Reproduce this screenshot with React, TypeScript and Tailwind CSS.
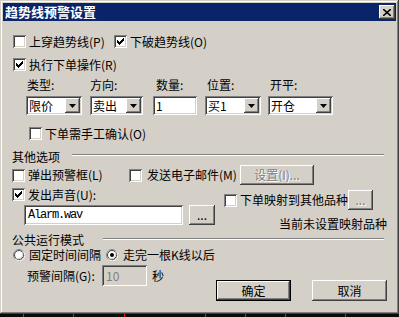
import React from "react";

const sunken =
  "shadow-[inset_1px_1px_#808080,inset_-1px_-1px_#ffffff,inset_2px_2px_#404040,inset_-2px_-2px_#d4d0c8]";
const raised =
  "shadow-[inset_-1px_-1px_#404040,inset_1px_1px_#ffffff,inset_-2px_-2px_#808080,inset_2px_2px_#d4d0c8]";
const disabledText = "text-[#808080] [text-shadow:1px_1px_#ffffff]";

function Check({ checked }: { checked?: boolean }) {
  const cols = [
    [3, 5],
    [4, 6],
    [5, 7],
    [6, 6],
    [7, 5],
    [8, 4],
    [9, 3],
  ];
  return (
    <div className={`w-[13px] h-[13px] bg-white shrink-0 relative ${sunken}`}>
      {checked && (
        <svg width="13" height="13" className="absolute left-0 top-0">
          {cols.map(([x, y]) => (
            <rect key={x} x={x} y={y} width="1" height="3" fill="#000" />
          ))}
        </svg>
      )}
    </div>
  );
}

function CheckLabel({
  checked,
  text,
  className = "",
  gap = "gap-[3px]",
}: {
  checked?: boolean;
  text: string;
  className?: string;
  gap?: string;
}) {
  return (
    <div className={`flex items-center h-[13px] shrink-0 ${gap} ${className}`}>
      <Check checked={checked} />
      <span className="whitespace-nowrap">{text}</span>
    </div>
  );
}

function Radio({ checked }: { checked?: boolean }) {
  return (
    <svg width="12" height="12" className="shrink-0">
      <circle cx="6" cy="6" r="5.5" fill="#fff" stroke="#808080" />
      <path d="M10.2 2.4 A5.5 5.5 0 0 1 2.4 10.2" fill="none" stroke="#fff" />
      <circle cx="6" cy="6" r="4.5" fill="#fff" stroke="#404040" />
      <path d="M9.3 3.2 A4.5 4.5 0 0 1 3.2 9.3" fill="none" stroke="#d4d0c8" />
      {checked && <circle cx="6" cy="6" r="2" fill="#000" />}
    </svg>
  );
}

function Select({ text, className }: { text: string; className: string }) {
  return (
    <div className={`h-[19px] bg-white flex items-center shrink-0 ${sunken} ${className}`}>
      <span className="flex-1 pl-[3px] whitespace-nowrap leading-[15px]">{text}</span>
      <div
        className={`w-[15px] h-[15px] mr-[2px] bg-[#d4d0c8] flex items-center justify-center ${raised}`}
      >
        <svg width="7" height="4">
          <path d="M0 0 H7 L3.5 4 Z" fill="#000" />
        </svg>
      </div>
    </div>
  );
}

function Btn({
  children,
  className,
  disabled,
  isDefault,
}: {
  children: React.ReactNode;
  className: string;
  disabled?: boolean;
  isDefault?: boolean;
}) {
  if (isDefault) {
    return (
      <div className={`border border-black shrink-0 flex ${className}`}>
        <div className={`flex-1 bg-[#d4d0c8] flex items-center justify-center ${raised}`}>
          {children}
        </div>
      </div>
    );
  }
  return (
    <div
      className={`bg-[#d4d0c8] flex items-center justify-center shrink-0 ${raised} ${
        disabled ? disabledText : ""
      } ${className}`}
    >
      {children}
    </div>
  );
}

export default function App() {
  return (
    <div className="w-[399px] h-[317px] bg-[#0a0a0a] overflow-hidden [font-family:'Noto_Sans_CJK_SC',sans-serif] text-[12px] leading-[14px] text-black">
      <div className="w-[399px] h-[314px] bg-[#d4d0c8] p-[3px] shadow-[inset_-1px_-1px_#404040,inset_1px_1px_#d4d0c8,inset_-2px_-2px_#808080,inset_2px_2px_#ffffff] flex flex-col">
        {/* Title bar */}
        <div className="h-[18px] bg-[#0a246a] flex items-center justify-between pl-[2px] pr-[1px] shrink-0">
          <span className="text-white font-bold text-[13px] leading-[18px] whitespace-nowrap">
            趋势线预警设置
          </span>
          <div className={`w-[16px] h-[14px] bg-[#d4d0c8] flex items-center justify-center ${raised}`}>
            <svg width="8" height="7">
              <path d="M0 0 L8 7 M8 0 L0 7" stroke="#000" strokeWidth="1.6" />
            </svg>
          </div>
        </div>

        {/* Content */}
        <div className="flex flex-col">
          <div className="mt-[14px] flex items-center">
            <CheckLabel text="上穿趋势线(P)" className="ml-[10px] w-[101px]" />
            <CheckLabel checked text="下破趋势线(O)" />
          </div>

          <div className="mt-[10px] flex">
            <CheckLabel checked text="执行下单操作(R)" className="ml-[10px]" />
          </div>

          <div className="mt-[7px] flex h-[14px]">
            <span className="ml-[24px] w-[63px] shrink-0">类型:</span>
            <span className="w-[66px] shrink-0">方向:</span>
            <span className="w-[51px] shrink-0">数量:</span>
            <span className="w-[63px] shrink-0">位置:</span>
            <span className="shrink-0">开平:</span>
          </div>

          <div className="mt-[4px] flex">
            <Select text="限价" className="ml-[23px] w-[56px]" />
            <Select text="卖出" className="ml-[8px] w-[53px]" />
            <div className={`ml-[10px] w-[44px] h-[19px] bg-white shrink-0 flex items-center pl-[3px] ${sunken}`}>
              <span className="leading-[15px]">1</span>
            </div>
            <Select text="买1" className="ml-[8px] w-[56px]" />
            <Select text="开仓" className="ml-[7px] w-[65px]" />
          </div>

          <div className="mt-[12px] flex">
            <CheckLabel text="下单需手工确认(O)" className="ml-[26px]" />
          </div>

          {/* 其他选项 */}
          <div className="mt-[10px] flex items-start h-[14px]">
            <span className="ml-[9px] w-[60px] shrink-0">其他选项</span>
            <div className="mt-[4px] w-[312px] h-[2px] border-t border-t-[#808080] border-b border-b-white" />
          </div>

          <div className="mt-[1px] flex items-center h-[20px]">
            <CheckLabel text="弹出预警框(L)" className="ml-[9px] w-[117px]" />
            <CheckLabel text="发送电子邮件(M)" gap="gap-[5px]" className="w-[111px]" />
            <Btn disabled className="w-[74px] h-[20px]">
              设置(I)...
            </Btn>
          </div>

          <div className="flex items-start">
            <div className="ml-[9px] w-[212px] shrink-0 flex flex-col">
              <div className="mt-[3px] flex">
                <CheckLabel checked text="发出声音(U):" />
              </div>
              <div className="mt-[4px] flex">
                <div
                  className={`ml-[12px] w-[159px] h-[20px] bg-white flex items-center pl-[4px] ${sunken}`}
                >
                  <span className="[font-family:'Liberation_Mono',monospace] tracking-[-1.2px]">
                    Alarm.wav
                  </span>
                </div>
                <Btn className="ml-[6px] w-[26px] h-[20px]">...</Btn>
              </div>
            </div>
            <div className="flex flex-col">
              <div className="mt-[5px] flex items-center h-[20px]">
                <CheckLabel text="下单映射到其他品种" className="w-[124px]" />
                <Btn disabled className="w-[25px] h-[20px]">
                  ...
                </Btn>
              </div>
              <span className="mt-[7px] ml-[55px] whitespace-nowrap">当前未设置映射品种</span>
            </div>
          </div>

          {/* 公共运行模式 */}
          <div className="mt-[2px] flex items-start h-[14px]">
            <span className="ml-[9px] w-[91px] shrink-0">公共运行模式</span>
            <div className="mt-[5px] w-[281px] h-[2px] border-t border-t-[#808080] border-b border-b-white" />
          </div>

          <div className="mt-[2px] flex items-center h-[12px]">
            <div className="ml-[10px] w-[93px] shrink-0 flex items-center gap-[4px]">
              <Radio />
              <span className="whitespace-nowrap">固定时间间隔</span>
            </div>
            <div className="flex items-center gap-[5px]">
              <Radio checked />
              <span className="whitespace-nowrap">走完一根K线以后</span>
            </div>
          </div>

          <div className="mt-[4px] flex items-start">
            <div className="ml-[24px] flex items-center h-[21px]">
              <span className="w-[75px] shrink-0 whitespace-nowrap">预警间隔(G):</span>
              <div className={`w-[45px] h-[21px] bg-[#d4d0c8] flex items-center pl-[4px] ${sunken}`}>
                <span className="text-[#808080]">10</span>
              </div>
              <span className="ml-[5px] w-[12px] shrink-0">秒</span>
            </div>
            <div className="mt-[15px] ml-[52px] flex gap-[21px]">
              <Btn isDefault className="w-[75px] h-[21px]">
                确定
              </Btn>
              <Btn className="w-[75px] h-[21px]">取消</Btn>
            </div>
          </div>
        </div>
      </div>
      <div className="h-[3px] flex">
        <div className="ml-[23px] w-[1px] h-[3px] bg-[#e02020]" />
        <div className="ml-[49px] w-[1px] h-[3px] bg-[#e02020]" />
        <div className="ml-[50px] w-[1px] h-[3px] bg-[#e02020]" />
        <div className="ml-[80px] w-[1px] h-[3px] bg-[#e02020]" />
        <div className="ml-[39px] w-[1px] h-[3px] bg-[#e02020]" />
        <div className="ml-[39px] w-[1px] h-[3px] bg-[#e02020]" />
        <div className="ml-[59px] w-[1px] h-[3px] bg-[#e02020]" />
      </div>
    </div>
  );
}
